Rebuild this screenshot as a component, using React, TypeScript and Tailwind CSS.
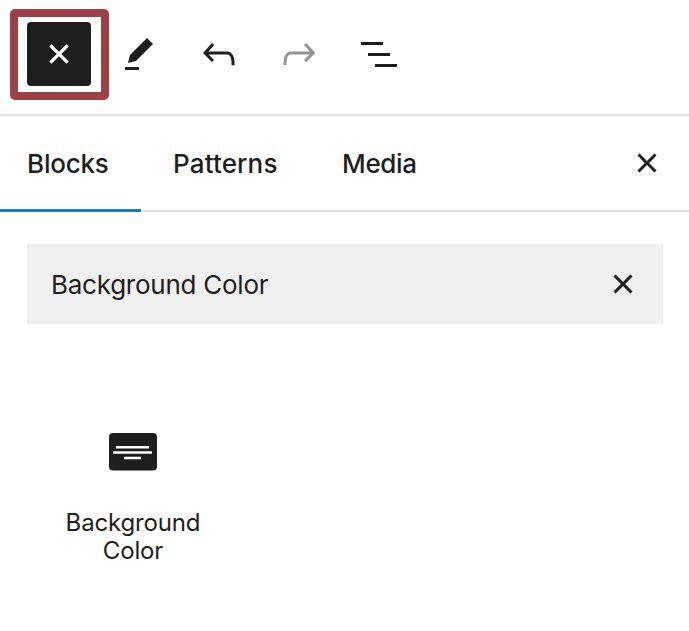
import React, { useState } from 'react';
import clsx from 'clsx';

interface IconProps {
  path: string;
  className?: string;
}

interface Tab {
  name: string;
  className: string;
  labelClassName: string;
}

const ICONS = {
  close:
    'M12 13.06l3.712 3.713 1.061-1.06L13.061 12l3.712-3.712-1.06-1.06L12 10.938 8.288 7.227l-1.061 1.06L10.939 12l-3.712 3.712 1.06 1.061L12 13.061z',
  plus: 'M11.2 12.8V18.1H12.8V12.8H18.1V11.2H12.8V5.9H11.2V11.2H5.9V12.8H11.2Z',
  edit: 'm19 7-3-3-8.5 8.5-1 4 4-1L19 7Zm-7 11.5H5V20h7v-1.5Z',
  undo: 'M18.3 11.7c-.6-.6-1.4-.9-2.3-.9H6.7l2.9-3.3-1.1-1-4.5 5L8.5 16l1-1-2.7-2.7H16c.5 0 .9.2 1.3.5 1 1 1 3.4 1 4.5v.3h1.5v-.2c0-1.5 0-4.3-1.5-5.7z',
  redo: 'M15.6 6.5l-1.1 1 2.9 3.3H8c-.9 0-1.7.3-2.3.9-1.4 1.5-1.4 4.2-1.4 5.6v.2h1.5v-.3c0-1.1 0-3.5 1-4.5.3-.3.7-.5 1.3-.5h9.2L14.5 15l1.1 1.1 4.6-4.6-4.6-5z',
  listView: 'M3 6h11v1.5H3V6Zm3.5 5.5h11V13h-11v-1.5ZM21 17H10v1.5h11V17Z'
};

const TABS: Tab[] = [
  { name: 'Blocks', className: 'w-[141px] pl-[27px]', labelClassName: 'tracking-[-0.2px]' },
  { name: 'Patterns', className: 'w-[169px] pl-8', labelClassName: 'tracking-[0.15px]' },
  { name: 'Media', className: 'w-[140px] pl-8', labelClassName: 'tracking-[-0.35px]' }
];

const Icon: React.FC<IconProps> = ({ path, className }) => (
  <svg viewBox="0 0 24 24" fill="currentColor" className={clsx('size-12 shrink-0', className)}>
    <path d={path} />
  </svg>
);

const Toolbar: React.FC = () => (
  <div className="flex h-[116px] items-start border-b-2 border-[#e0e0e0] pl-[10px] pt-[9px]">
    <div className="flex h-[91px] w-[99px] shrink-0 rounded-[5px] border-8 border-[#9b4149] pl-[9px] pt-[5px]">
      <button className="flex size-16 items-center justify-center rounded-[4px] bg-[#1e1e1e] text-white" title="Toggle block inserter">
        <Icon path={ICONS.plus} className="rotate-45" />
      </button>
    </div>
    <div className="ml-[6px] mt-[21px] flex gap-8">
      <button title="Tools"><Icon path={ICONS.edit} /></button>
      <button title="Undo"><Icon path={ICONS.undo} /></button>
      <button title="Redo" className="text-[#949494]"><Icon path={ICONS.redo} /></button>
      <button title="Document Overview"><Icon path={ICONS.listView} /></button>
    </div>
  </div>
);

const App: React.FC = () => {
  const [activeTab, setActiveTab] = useState('Blocks');
  const [search, setSearch] = useState('Background Color');

  return (
    <div className="h-[631px] w-[689px] overflow-hidden bg-[#fefefe] font-['Inter',sans-serif] text-[#1e1e1e]">
      <Toolbar />

      {/* Tabs */}
      <div className="flex h-24 border-b-2 border-[#dddddd]">
        {TABS.map(tab => (
          <button
            key={tab.name}
            onClick={() => setActiveTab(tab.name)}
            className={clsx(
              '-mb-0.5 flex h-24 items-center border-b-3 pt-0.5 text-left text-[26px] font-medium',
              tab.className,
              activeTab === tab.name ? 'border-[#2379ab]' : 'border-transparent'
            )}
          >
            <span className={tab.labelClassName}>{tab.name}</span>
          </button>
        ))}
        <button className="ml-auto mr-[18px] self-center" title="Close">
          <Icon path={ICONS.close} />
        </button>
      </div>

      {/* Search */}
      <div className="ml-[27px] mt-8 flex h-20 w-[636px] items-center rounded-[2px] bg-[#efefef] pl-6 pr-4">
        <input
          type="text"
          value={search}
          onChange={(e) => setSearch(e.target.value)}
          className="min-w-0 flex-1 text-[26px] tracking-[-0.25px] outline-none"
        />
        <button onClick={() => setSearch('')} title="Reset search">
          <Icon path={ICONS.close} />
        </button>
      </div>

      {/* Results */}
      <div className="ml-[27px] mt-[109px] flex w-[212px] flex-col items-center">
        <svg viewBox="0 0 48 38" className="h-[38px] w-12">
          <rect width="48" height="37.5" rx="4" fill="#1e1e1e" />
          <path d="M7 13h33v2.4H7zM4 18.2h39v2.6H4zM15 23.7h17v2.5H15z" fill="#fff" />
        </svg>
        <div className="mt-[38px] text-center text-[24px] leading-7 tracking-[-0.15px]">
          Background
          <br />
          Color
        </div>
      </div>
    </div>
  );
};

export default App;
